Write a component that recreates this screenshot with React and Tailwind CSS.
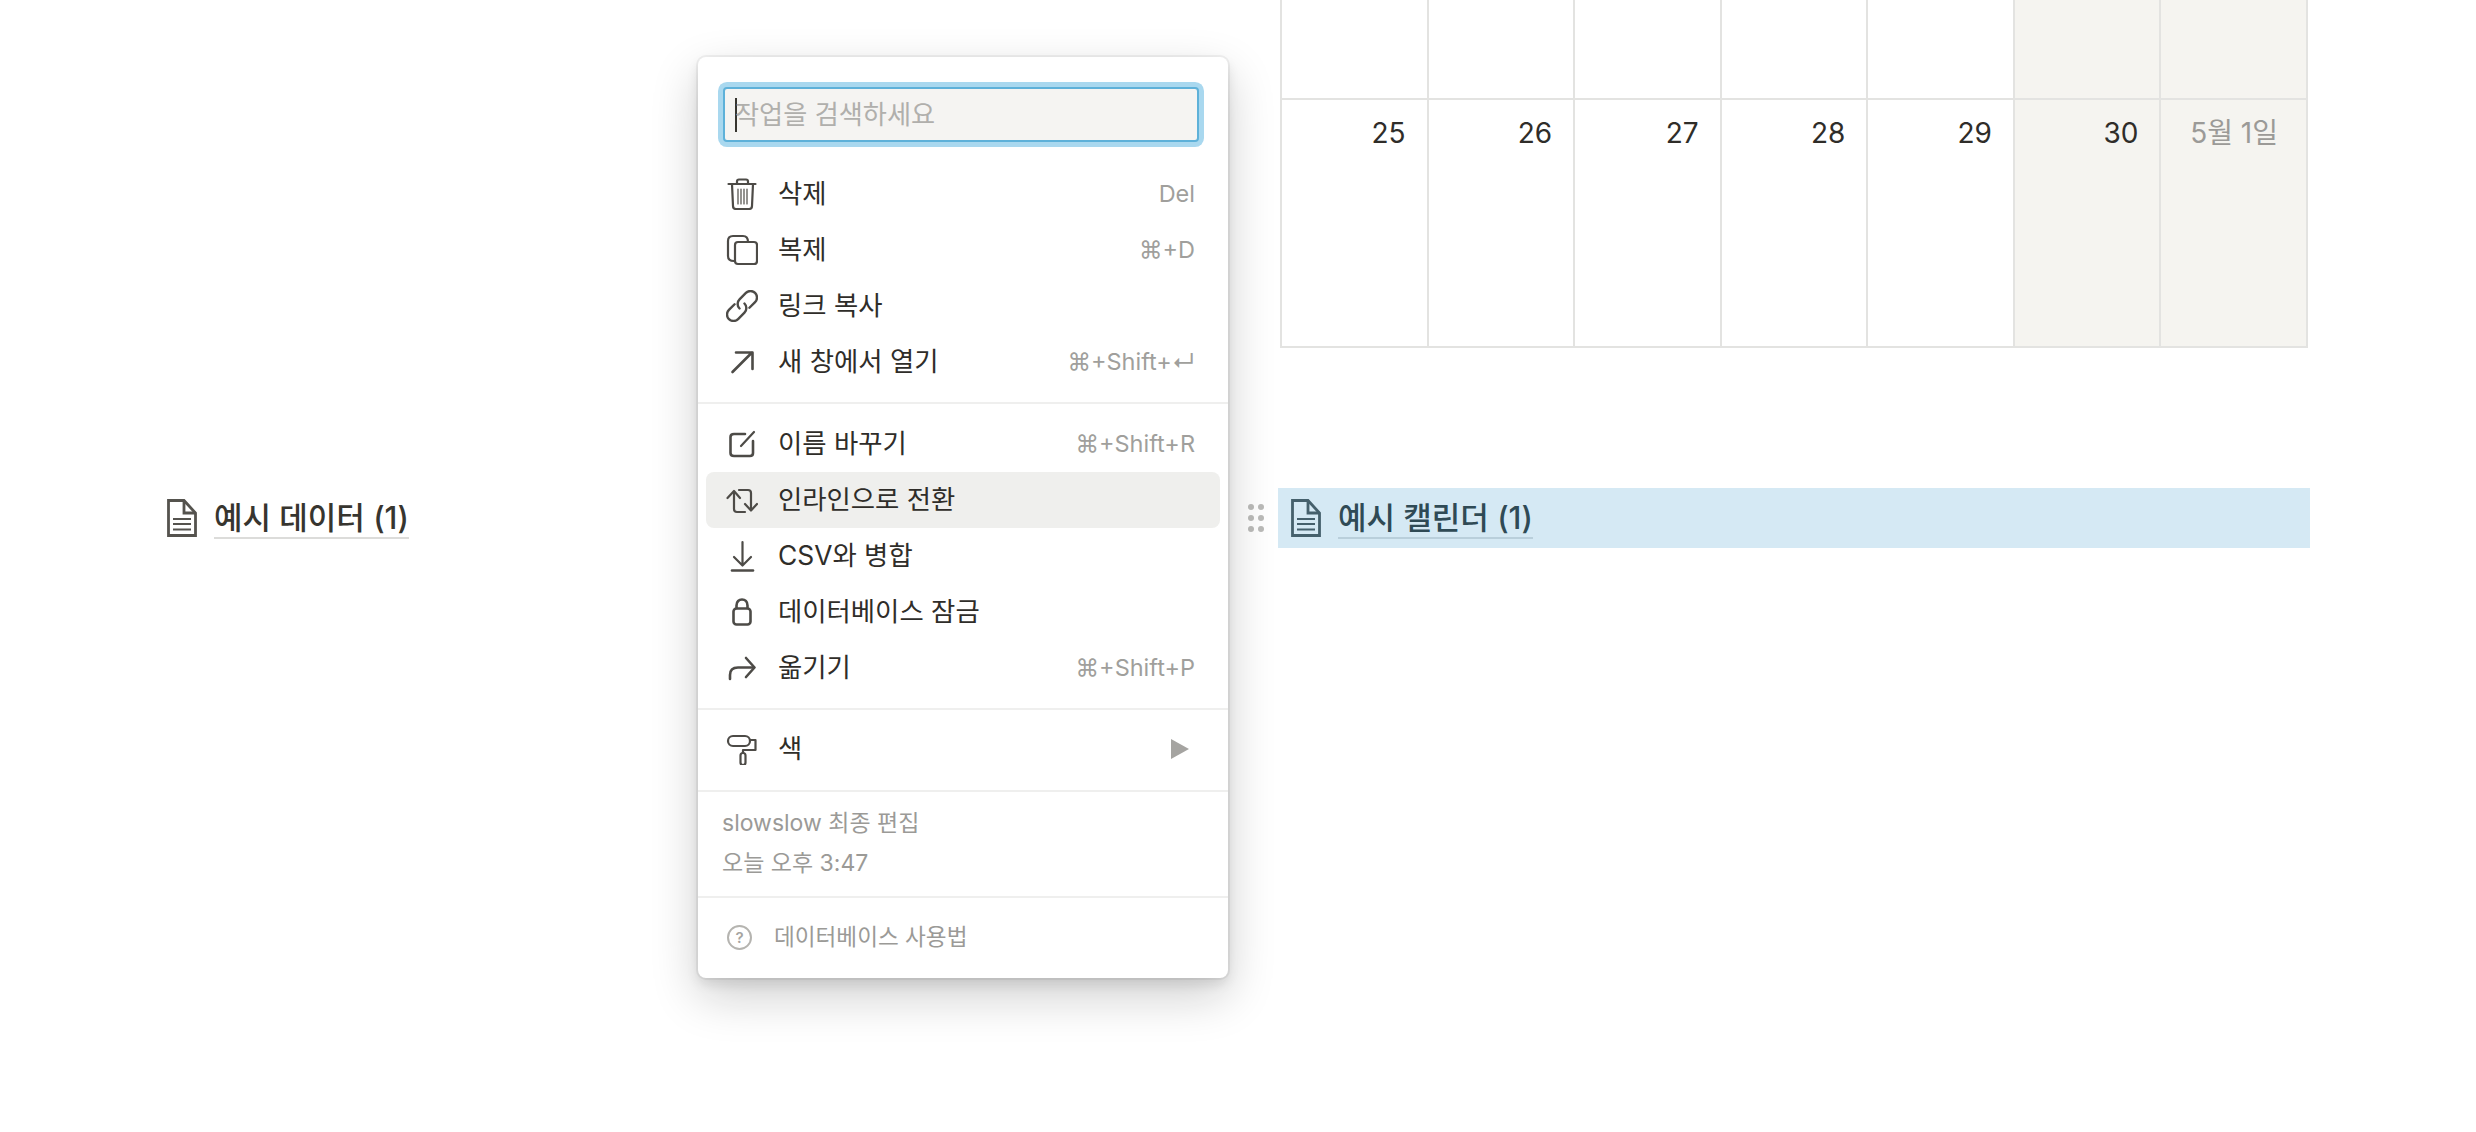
import React from 'react'

const Svg = ({ children, cls = 'w-8 h-8' }) => (
  <svg viewBox="0 0 32 32" className={cls} fill="none" stroke="#4d4b47" strokeWidth="2.2" strokeLinecap="round" strokeLinejoin="round">{children}</svg>
)

const TrashIcon = () => (
  <Svg>
    <path d="M2.5 6H29.5" />
    <path d="M11 6V3.5C11 2 12 1.5 13 1.5H20C21 1.5 22 2 22 3.5V6" />
    <path d="M6 6L7 28C7 30 8 31 10 31H23C25 31 26 30 26 28L27 6" />
    <path d="M12 11V26M15 11V26M18 11V26M21 11V26" strokeWidth="1.2" />
  </Svg>
)
const CopyIcon = () => (
  <Svg>
    <path d="M8 27C4 27 2 25 2 22V7C2 4 4 2 7 2H17C20 2 22 4 22 8" />
    <rect x="9" y="8" width="22" height="22" rx="3" />
  </Svg>
)
const LinkIcon = () => (
  <Svg>
    <g transform="rotate(-45 16 16)" strokeWidth="2.4">
      <path d="M12 9.5H4A6.5 6.5 0 0 0 4 22.5H13A6.5 6.5 0 0 0 19.5 16" />
      <path d="M20 22.5H28A6.5 6.5 0 0 0 28 9.5H19A6.5 6.5 0 0 0 12.5 16" />
    </g>
  </Svg>
)
const ArrowIcon = () => (
  <Svg>
    <path d="M6.5 26L26 6.5M10 6.5H26.5V23" strokeWidth="2.6" />
  </Svg>
)
const RenameIcon = () => (
  <Svg>
    <path d="M19 6H8C5.5 6 4.5 7 4.5 9V25C4.5 27 5.5 28 8 28H24C26 28 27 27 27 25V13" strokeWidth="2.6" />
    <path d="M15 18L28 4" />
  </Svg>
)
const InlineIcon = () => (
  <Svg>
    <path d="M13 6H22C24 6 25 7 25 9V26" />
    <path d="M19 20L25 26.5L31 20" />
    <path d="M8 8V25C8 27 9 28 11 28H19" />
    <path d="M1.5 14L8 7L14 14" />
  </Svg>
)
const DownIcon = () => (
  <Svg>
    <path d="M16.5 2V25M8 17L16.5 25.5L25 17" />
    <path d="M6 30.5H27" strokeWidth="2.6" />
  </Svg>
)
const LockIcon = () => (
  <Svg>
    <rect x="7.5" y="12.5" width="17" height="16" rx="3" strokeWidth="2.6" />
    <path d="M10.5 12V9.5C10.5 5.5 13 3.5 16 3.5C19 3.5 21.5 5.5 21.5 9.5V12" strokeWidth="2.6" />
  </Svg>
)
const MoveIcon = () => (
  <Svg>
    <path d="M4 27V23C4 18 7 15.5 12 15.5H28" strokeWidth="2.6" />
    <path d="M20 6L28.5 15.5L20 25" strokeWidth="2.6" />
  </Svg>
)
const RollerIcon = () => (
  <Svg>
    <rect x="2" y="3" width="22" height="10" rx="5" />
    <path d="M24 7H29.5V17H17V20" />
    <rect x="14.5" y="20" width="5" height="12" rx="2.5" />
  </Svg>
)

const DocIcon = ({ color }) => (
  <svg viewBox="0 0 30 38" className="w-[30px] h-[38px] shrink-0" fill="none" stroke={color} strokeWidth="2.8">
    <path d="M1.5 1.5H17L28.5 14V36.5H1.5Z" />
    <path d="M17 1.5V14H28.5" />
    <path d="M6 20H24M6 25H24M6 30.5H24" strokeWidth="2.2" />
  </svg>
)

const groupA = [
  { icon: TrashIcon, label: '삭제', key: 'Del' },
  { icon: CopyIcon, label: '복제', key: '⌘+D' },
  { icon: LinkIcon, label: '링크 복사' },
  { icon: ArrowIcon, label: '새 창에서 열기', key: '⌘+Shift+↵' },
]
const groupB = [
  { icon: RenameIcon, label: '이름 바꾸기', key: '⌘+Shift+R' },
  { icon: InlineIcon, label: '인라인으로 전환', active: true },
  { icon: DownIcon, label: 'CSV와 병합' },
  { icon: LockIcon, label: '데이터베이스 잠금' },
  { icon: MoveIcon, label: '옮기기', key: '⌘+Shift+P' },
]

function MenuRow({ icon: Icon, label, hint, active, children }) {
  return (
    <div className={'mx-2 h-14 pl-5 pr-[25px] flex items-center rounded-lg ' + (active ? 'bg-[#efefed]' : '')}>
      <Icon />
      <span className="ml-5 flex-1 text-[26.4px] text-[#2f2d29]">{label}</span>
      {hint && <span className="text-[23.5px] text-[#a09f9c]">{hint}</span>}
      {children}
    </div>
  )
}

const days = [
  { n: '25' }, { n: '26' }, { n: '27' }, { n: '28' }, { n: '29' },
  { n: '30', off: true }, { n: '5월 1일', off: true, muted: true },
]

function Calendar() {
  return (
    <div className="ml-[2px] w-[1028px] border-b-2 border-l-2 border-[#e3e3e1] grid grid-cols-7">
      {days.map(d => (
        <div key={d.n} className={'h-[100px] border-r-2 border-b-2 border-[#e3e3e1] ' + (d.off ? 'bg-[#f5f4f0]' : '')} />
      ))}
      {days.map(d => (
        <div key={d.n} className={'h-[246px] border-r-2 border-[#e3e3e1] pt-[13px] text-right text-[28px] leading-[40px] ' + (d.off ? 'bg-[#f5f4f0] ' : '') + (d.muted ? 'pr-[28px] text-[#9b9a97]' : 'pr-[21px] text-[#2f2d29]')}>
          {d.n}
        </div>
      ))}
    </div>
  )
}

export default function App() {
  return (
    <div className="relative h-[1132px] overflow-hidden bg-white flex font-['Inter','Noto_Sans_CJK_KR','DejaVu_Sans',sans-serif]">
      {/* left page */}
      <div className="w-[1278px] pt-[488px] pl-[167px]">
        <div className="h-[60px] flex items-center">
          <DocIcon color="#55534e" />
          <span className="ml-[17px] pt-[2px] text-[31px] leading-[38px] font-medium text-[#37352f] border-b-2 border-[#dcdcda]">예시 데이터 (1)</span>
        </div>
      </div>

      {/* right page */}
      <div className="w-[1032px]">
        <Calendar />
        <div className="relative mt-[140px] h-[60px] pl-[13px] flex items-center bg-[#d5e9f4]">
          <div className="absolute -left-[30px] top-[16px] grid grid-cols-2 gap-x-1 gap-y-[5px]">
            {[0, 1, 2, 3, 4, 5].map(i => <span key={i} className="w-[6px] h-[6px] rounded-full bg-[#bbbbb9]" />)}
          </div>
          <DocIcon color="#45606c" />
          <span className="ml-[17px] pt-[2px] text-[31px] leading-[38px] font-medium text-[#2f4a55] border-b-2 border-[#b9cfdb]">예시 캘린더 (1)</span>
        </div>
      </div>

      {/* menu popup */}
      <div className="absolute left-[698px] top-[57px] w-[530px] h-[921px] bg-white rounded-lg shadow-[0_0_0_2px_rgba(15,15,15,0.05),0_6px_12px_rgba(15,15,15,0.1),0_18px_48px_rgba(15,15,15,0.2)]">
        <div className="pt-[30px] px-[25px] pb-6">
          <div className="h-[55px] w-[476px] px-[10px] flex items-center bg-[#f5f4f2] rounded border-2 border-[#5eb1d9] ring-[5px] ring-[#a9d8ef]">
            <span className="w-[2px] h-[34px] bg-[#37352f]" />
            <span className="-ml-[2px] text-[26.2px] text-[#b0afac]">작업을 검색하세요</span>
          </div>
        </div>
        {groupA.map(r => <MenuRow key={r.label} icon={r.icon} label={r.label} hint={r.key} />)}
        <div className="mt-3 mb-3 h-0.5 bg-[#efefee]" />
        {groupB.map(r => <MenuRow key={r.label} icon={r.icon} label={r.label} hint={r.key} active={r.active} />)}
        <div className="mt-3 mb-[11px] h-0.5 bg-[#efefee]" />
        <MenuRow icon={RollerIcon} label="색">
          <svg viewBox="0 0 18 20" className="w-[18px] h-5 mr-[6px]"><polygon points="0,0 18,10 0,20" fill="#a5a4a1" /></svg>
        </MenuRow>
        <div className="mt-[13px] h-0.5 bg-[#efefee]" />
        <div className="px-6 pt-[11px] pb-[13px] text-[23px] leading-[40px] text-[#9b9a97]">
          <div>slowslow 최종 편집</div>
          <div>오늘 오후 3:47</div>
        </div>
        <div className="h-0.5 bg-[#efefee]" />
        <div className="mt-[26px] pl-[29px] flex items-center">
          <span className="w-[25px] h-[25px] rounded-full border-2 border-[#b5b4b0] flex items-center justify-center text-[15px] leading-none font-semibold text-[#a5a4a1]">?</span>
          <span className="ml-[22px] text-[22.6px] leading-[26px] text-[#9b9a97]">데이터베이스 사용법</span>
        </div>
      </div>
    </div>
  )
}
